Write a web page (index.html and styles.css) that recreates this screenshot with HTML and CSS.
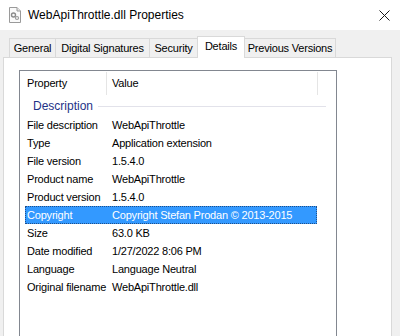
FILE: index.html
```html
<!DOCTYPE html>
<html>
<head>
<meta charset="utf-8">
<link rel="stylesheet" href="styles.css">
</head>
<body>
<div class="window">
  <div class="titlebar">
    <svg class="app-icon" width="14" height="16" viewBox="0 0 14 16">
      <path d="M1.5 0.5 H9 L12.5 4 V15.5 H1.5 Z" fill="#fafafa" stroke="#9a9a9a"/>
      <path d="M9 0.5 V4 H12.5" fill="#e6e6e6" stroke="#9a9a9a"/>
      <circle cx="5.5" cy="8" r="2" fill="none" stroke="#8a8a8a" stroke-width="1.4"/>
      <circle cx="9" cy="11" r="1.5" fill="none" stroke="#9a9a9a" stroke-width="1.2"/>
    </svg>
    <span class="title">WebApiThrottle.dll Properties</span>
    <svg class="close" width="11" height="11" viewBox="0 0 11 11">
      <path d="M0.5 0.5 L10.5 10.5 M10.5 0.5 L0.5 10.5" stroke="#1a1a1a" stroke-width="1"/>
    </svg>
  </div>
  <div class="dialog">
    <div class="tabs">
      <div class="tab w-general">General</div>
      <div class="tab w-digital">Digital Signatures</div>
      <div class="tab w-security">Security</div>
      <div class="tab selected w-details">Details</div>
      <div class="tab w-previous">Previous Versions</div>
    </div>
    <div class="panel">
      <div class="listview">
        <div class="header">
          <div class="hcell hcell-prop">Property</div>
          <div class="hdiv"></div>
          <div class="hcell hcell-val">Value</div>
          <div class="hdiv"></div>
        </div>
        <div class="group">
          <span class="group-title">Description</span>
          <span class="group-line"></span>
        </div>
        <div class="row"><span class="c1">File description</span><span class="c2">WebApiThrottle</span></div>
        <div class="row"><span class="c1">Type</span><span class="c2">Application extension</span></div>
        <div class="row"><span class="c1">File version</span><span class="c2">1.5.4.0</span></div>
        <div class="row"><span class="c1">Product name</span><span class="c2">WebApiThrottle</span></div>
        <div class="row"><span class="c1">Product version</span><span class="c2">1.5.4.0</span></div>
        <div class="row selected"><span class="c1">Copyright</span><span class="c2">Copyright Stefan Prodan © 2013-2015</span></div>
        <div class="row"><span class="c1">Size</span><span class="c2">63.0 KB</span></div>
        <div class="row"><span class="c1">Date modified</span><span class="c2">1/27/2022 8:06 PM</span></div>
        <div class="row"><span class="c1">Language</span><span class="c2">Language Neutral</span></div>
        <div class="row"><span class="c1">Original filename</span><span class="c2">WebApiThrottle.dll</span></div>
      </div>
    </div>
  </div>
</div>
</body>
</html>
```
FILE: styles.css
```css
* { box-sizing: border-box; }
html, body {
  margin: 0;
  padding: 0;
  width: 400px;
  height: 336px;
  overflow: hidden;
  background: #f0f0f0;
}
body {
  font-family: "Liberation Sans", Arial, sans-serif;
  font-size: 11px;
  letter-spacing: -0.2px;
  color: #000;
}
.window {
  width: 400px;
  height: 336px;
  overflow: hidden;
}
.titlebar {
  height: 30px;
  background: #ffffff;
  display: flex;
  align-items: center;
  padding-left: 8px;
}
.app-icon {
  margin-top: 0px;
}
.title {
  font-size: 12px;
  letter-spacing: 0;
  margin-left: 6px;
  flex: 1;
  color: #000;
}
.close {
  margin-right: 10px;
  margin-top: 0px;
}
.dialog {
  height: 306px;
  background: #f0f0f0;
  padding-top: 8px;
}
.tabs {
  display: flex;
  align-items: flex-end;
  height: 19px;
  padding-left: 9px;
  position: relative;
  z-index: 2;
}
.tab {
  height: 19px;
  border: 1px solid #d9d9d9;
  border-bottom: none;
  margin-right: -1px;
  background: #f0f0f0;
  display: flex;
  align-items: center;
  justify-content: center;
  padding-bottom: 1px;
  white-space: nowrap;
}
.tab.selected {
  height: 22px;
  margin-bottom: -1px;
  background: #ffffff;
  position: relative;
  z-index: 3;
  padding-bottom: 3px;
}
.w-general { width: 47px; }
.w-digital { width: 95px; }
.w-security { width: 49px; }
.w-details { width: 48px; }
.w-previous { width: 92px; }
.panel {
  margin-left: 3px;
  width: 389px;
  height: 300px;
  background: #ffffff;
  border: 1px solid #d9d9d9;
  padding-left: 15px;
  padding-top: 12px;
  position: relative;
  z-index: 1;
}
.listview {
  width: 318px;
  height: 300px;
  border: 1px solid #828790;
  background: #ffffff;
}
.header {
  display: flex;
  height: 25px;
  align-items: stretch;
}
.hcell {
  display: flex;
  align-items: center;
  padding-bottom: 1px;
}
.hcell-prop { width: 86px; padding-left: 7px; }
.hcell-val { width: 210px; padding-left: 5px; }
.hdiv {
  width: 1px;
  margin: 1px 0 1px 0;
  background: #e5e5e5;
}
.group {
  height: 20px;
  display: flex;
  align-items: center;
  padding-left: 13px;
  padding-right: 10px;
}
.group-title {
  font-size: 12px;
  letter-spacing: 0;
  color: #1e3287;
}
.group-line {
  flex: 1;
  height: 1px;
  background: #e2e2ea;
  margin-left: 5px;
  margin-top: 1px;
}
.row {
  margin-left: 5px;
  width: 292px;
  height: 18px;
  display: grid;
  grid-template-columns: 80px 1fr;
  align-items: center;
  border: 1px solid transparent;
  white-space: nowrap;
}
.c1 { padding-left: 1px; }
.c2 { padding-left: 6px; }
.row.selected {
  background: #3399ff;
  color: #ffffff;
  border: 1px dotted #1f4f8a;
}
```
